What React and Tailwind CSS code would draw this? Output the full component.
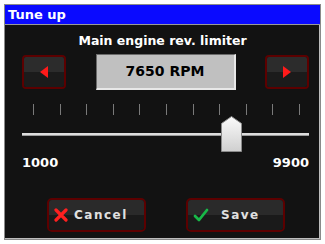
export default function App() {
  const ticks = Array.from({ length: 11 });
  const font = { fontFamily: '"DejaVu Sans", Verdana, sans-serif' };
  return (
    <div className="w-[325px] h-[244px] bg-white p-[4px]" style={font}>
      <div className="w-full h-full border border-[#8a8a8a] flex flex-col bg-[#121212] shadow-[inset_-1px_-1px_0_#bdbdbd]">
        <div className="h-[20px] bg-[#0a0aff] border-b border-[#9a9a9a] flex items-center pl-[3px] text-white text-[13px] font-bold leading-none">
          Tune up
        </div>
        <div className="mt-[8px] text-center text-white text-[12.5px] font-bold leading-[16px]">
          Main engine rev. limiter
        </div>
        <div className="mt-[5px] ml-[17px] w-[287px] flex justify-between items-center">
          <ArrowBtn dir="left" />
          <div className="w-[140px] h-[36px] bg-[#c0c0c0] border-t border-l border-[#6a6a6a] border-b-2 border-r-2 border-b-[#e8e8e8] border-r-[#e8e8e8] flex items-center justify-center text-black font-bold text-[14px]">
            7650 RPM
          </div>
          <ArrowBtn dir="right" />
        </div>
        <div className="mt-[14px] ml-[28px] w-[267px] h-[11px] flex justify-between">
          {ticks.map((_, i) => (
            <div key={i} className="w-px h-full bg-[#7a7a7a]" />
          ))}
        </div>
        <div className="relative mt-[18px] ml-[17px] w-[287px] h-[3px] bg-[#dcdcdc] border-b border-[#9a9a9a]">
          <svg className="absolute left-[199px] top-[-17px]" width="21" height="36" viewBox="0 0 21 36">
            <defs>
              <linearGradient id="tg" x1="0" y1="0" x2="0" y2="1">
                <stop offset="0" stopColor="#fbfbfb" />
                <stop offset="1" stopColor="#cfcfcf" />
              </linearGradient>
            </defs>
            <path d="M0.5 7.5 L10.5 0.5 L20.5 7.5 L20.5 35.5 L0.5 35.5 Z" fill="url(#tg)" stroke="#8a8a8a" strokeWidth="1" />
          </svg>
        </div>
        <div className="mt-[20px] ml-[17px] w-[287px] flex justify-between text-white font-bold text-[13px] leading-[14px]">
          <span>1000</span>
          <span>9900</span>
        </div>
        <div className="mt-[28px] flex">
          <ActionBtn className="ml-[42px]" icon={
            <svg width="14" height="14" viewBox="0 0 14 14"><path d="M2 2 L12 12 M12 2 L2 12" stroke="#ff2020" strokeWidth="3.2" strokeLinecap="round" /></svg>
          } label="Cancel" />
          <ActionBtn className="ml-[40px]" icon={
            <svg width="16" height="14" viewBox="0 0 16 14"><path d="M2 8 L6 12 L14 2" stroke="#18b848" strokeWidth="2.8" fill="none" strokeLinecap="round" strokeLinejoin="round" /></svg>
          } label="Save" gap="ml-[12px]" />
        </div>
      </div>
    </div>
  );
}

function ArrowBtn({ dir }) {
  return (
    <div className="w-[44px] h-[34px] rounded-[4px] border-2 border-[#5c0000] overflow-hidden flex flex-col relative">
      <div className="h-1/2 bg-[#2c2c2c]" />
      <div className="h-1/2 bg-[#1b1b1b]" />
      <div className="absolute inset-0 flex items-center justify-center">
        <svg width="8" height="12" viewBox="0 0 8 12">
          {dir === "left" ? (
            <path d="M8 0 L0 6 L8 12 Z" fill="#ff1a1a" />
          ) : (
            <path d="M0 0 L8 6 L0 12 Z" fill="#ff1a1a" />
          )}
        </svg>
      </div>
    </div>
  );
}

function ActionBtn({ icon, label, className, gap = "ml-[6px]" }) {
  return (
    <div className={`w-[99px] h-[34px] rounded-[5px] border-2 border-[#5c0000] overflow-hidden relative ${className}`}>
      <div className="h-1/2 bg-[#2a2a2a]" />
      <div className="h-1/2 bg-[#1a1a1a]" />
      <div className="absolute inset-0 flex items-center pl-[5px]">
        {icon}
        <span className={`${gap} text-[#e0e0e0] font-bold text-[12px] tracking-[1.5px]`}>{label}</span>
      </div>
    </div>
  );
}
